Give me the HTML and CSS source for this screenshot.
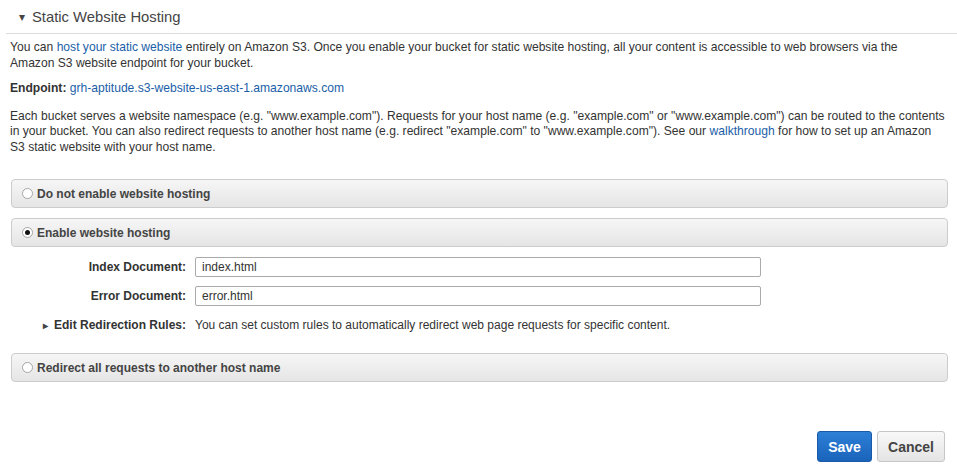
FILE: index.html
```html
<!DOCTYPE html>
<html>
<head>
<meta charset="utf-8">
<link rel="stylesheet" href="styles.css">
</head>
<body>
<div class="section">
  <div class="sec-head"><span class="caret">&#9662;</span><span class="sec-title">Static Website Hosting</span></div>
  <div class="sec-body">
    <p class="p1">You can <a href="#">host your static website</a> entirely on Amazon S3. Once you enable your bucket for static website hosting, all your content is accessible to web browsers via the Amazon S3 website endpoint for your bucket.</p>
    <p class="p2"><b>Endpoint:</b> <a href="#">grh-aptitude.s3-website-us-east-1.amazonaws.com</a></p>
    <p class="p3">Each bucket serves a website namespace (e.g. "www.example.com"). Requests for your host name (e.g. "example.com" or "www.example.com") can be routed to the contents in your bucket. You can also redirect requests to another host name (e.g. redirect "example.com" to "www.example.com"). See our <a href="#">walkthrough</a> for how to set up an Amazon S3 static website with your host name.</p>

    <div class="opt first"><span class="radio"></span><span class="opt-label">Do not enable website hosting</span></div>
    <div class="opt"><span class="radio on"></span><span class="opt-label">Enable website hosting</span></div>
    <div class="form">
      <div class="row"><label class="lbl">Index Document:</label><div class="input">index.html</div></div>
      <div class="row"><label class="lbl">Error Document:</label><div class="input">error.html</div></div>
      <div class="row rules"><label class="lbl"><span class="tri">&#9656;</span>Edit Redirection Rules:</label><span class="rules-text">You can set custom rules to automatically redirect web page requests for specific content.</span></div>
    </div>
    <div class="opt"><span class="radio"></span><span class="opt-label">Redirect all requests to another host name</span></div>
  </div>
  <div class="actions">
    <button class="btn save">Save</button>
    <button class="btn cancel">Cancel</button>
  </div>
</div>
</body>
</html>
```

FILE: styles.css
```css
html, body { margin: 0; padding: 0; background: #fff; }
body { font-family: "Liberation Sans", Arial, sans-serif; font-size: 12px; color: #333; width: 957px; }
a { color: #1a5ea8; text-decoration: none; }
.sec-head { display: flex; align-items: center; height: 33px; margin-left: 6px; border-bottom: 1px solid #ddd; }
.caret { font-size: 12px; color: #444; margin-left: 13px; width: 13px; }
.sec-title { font-size: 14.8px; color: #444; }
.sec-body { padding: 6px 9px 0 10px; }
p { margin: 0; line-height: 15.5px; font-size: 12.1px; }
.p1 { padding-right: 10px; }
.p2 { margin-top: 10px; }
.p3 { margin-top: 12px; }
.opt { display: flex; align-items: center; height: 27px; margin: 0 0 10px 1px; border: 1px solid #ccc; border-radius: 4px; background: linear-gradient(#f6f6f6, #e5e5e5); }
.opt.first { margin-top: 24px; }
.radio { width: 11px; height: 11px; border: 1px solid #a5a5a5; border-radius: 50%; background: #fff; margin-left: 10px; margin-right: 4px; box-sizing: border-box; display: flex; align-items: center; justify-content: center; }
.radio.on::after { content: ""; width: 5px; height: 5px; border-radius: 50%; background: #111; }
.opt-label { font-weight: bold; color: #444; }
.form { padding: 0 0 12px; }
.row { display: flex; align-items: center; margin-bottom: 9px; }
.lbl { width: 176px; text-align: right; font-weight: bold; color: #333; margin-right: 9px; }
.input { width: 566px; height: 20px; box-sizing: border-box; border: 1px solid #aaa; border-radius: 2px; padding: 0 6px; line-height: 18px; color: #333; }
.rules { margin-top: 12px; }
.tri { font-size: 10px; color: #444; margin-right: 6px; }
.rules-text { color: #333; }
.actions { display: flex; justify-content: flex-end; gap: 5px; padding: 39px 12px 0 0; }
.btn { font-family: "Liberation Sans", Arial, sans-serif; font-weight: bold; font-size: 14px; height: 31px; border-radius: 3px; padding: 0; }
.save { width: 55px; color: #fff; background: linear-gradient(#2d7fd6, #1a63bb); border: 1px solid #1a5aa6; }
.cancel { width: 68px; color: #444; background: linear-gradient(#f8f8f8, #e4e4e4); border: 1px solid #c6c6c6; }
```
